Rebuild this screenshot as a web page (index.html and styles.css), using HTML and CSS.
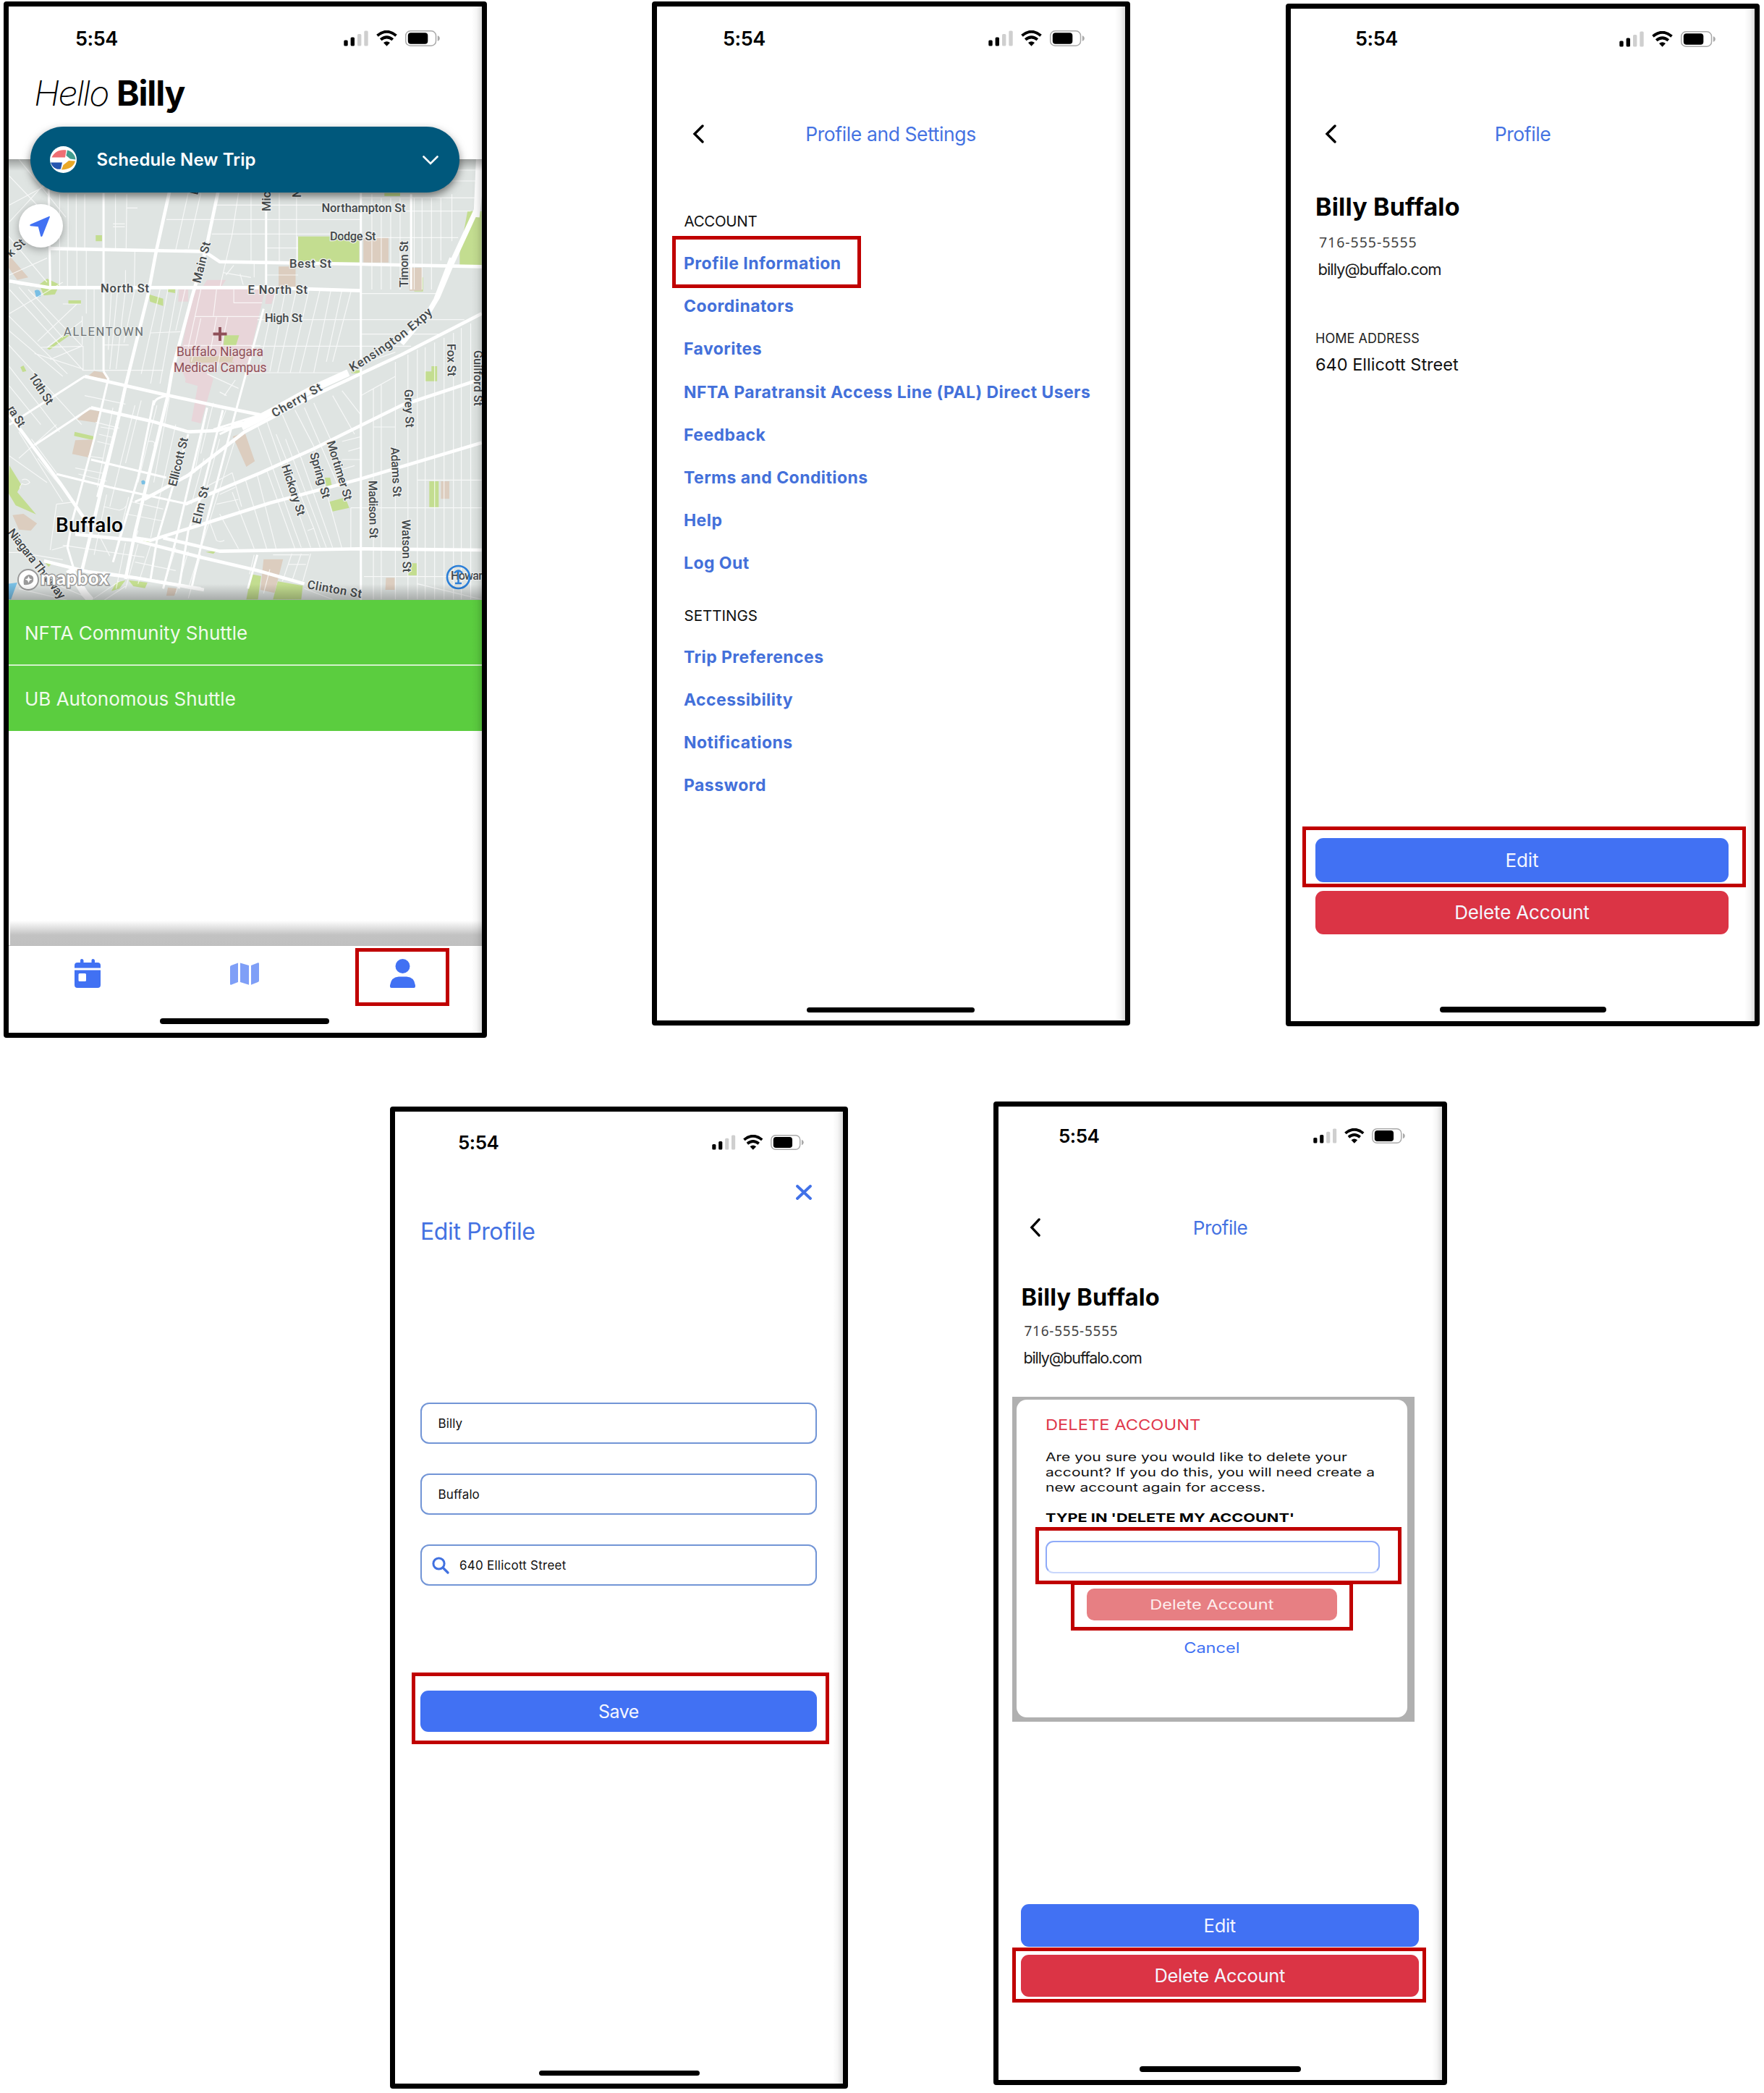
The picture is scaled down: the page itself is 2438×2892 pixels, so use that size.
FILE: index.html
```
<!DOCTYPE html>
<html lang="en">
<head>
<meta charset="utf-8">
<title>Profile and account screens</title>
<link rel="stylesheet" href="styles.css">
</head>
<body>
<svg class="defs" width="0" height="0" aria-hidden="true">
  <symbol id="status-icons" viewBox="0 0 133 22" preserveAspectRatio="none">
    <rect x="0.3" y="13.5" width="5.4" height="8" rx="1.6"/>
    <rect x="9.6" y="9.5" width="5.4" height="12" rx="1.6"/>
    <rect x="19" y="5" width="5.4" height="16.500" rx="1.6" fill="#cfcfcf"/>
    <rect x="28.300" y="0.500" width="5.4" height="21" rx="1.6" fill="#cfcfcf"/>
    <path d="M46.500 7.200Q59.500 -3.600 72.500 7.200" fill="none" stroke="#000" stroke-width="4"/>
    <path d="M51.200 12.800Q59.500 6 67.800 12.800" fill="none" stroke="#000" stroke-width="4"/>
    <path d="M55 17Q59.500 13.300 64 17L59.500 21.800Z"/>
    <rect x="85.700" y="0.800" width="41.800" height="20.400" rx="6.500" fill="#fff" stroke="#a9a9a9" stroke-width="1.500"/>
    <rect x="88.800" y="3.200" width="27.500" height="15.600" rx="4"/>
    <path d="M129.800 7.200Q132.800 8.200 132.800 11T129.800 14.800Z" fill="#a9a9a9"/>
  </symbol>
  <symbol id="back" viewBox="0 0 16 26" preserveAspectRatio="none">
    <path d="M14 2L3 13L14 24" fill="none" stroke="#000" stroke-width="3.400" stroke-linecap="round" stroke-linejoin="miter"/>
  </symbol>
</svg>

<main class="board">
  <div class="row row-top">

    <section class="phone home">
      <header class="status"><span class="time">5:54</span><svg class="status-icons"><use href="#status-icons"/></svg></header>
      <h1 class="hello"><i>Hello</i><b>Billy</b></h1>
      <div class="trip">
        <svg class="trip-logo" viewBox="0 0 37 37">
          <circle cx="18.500" cy="18.500" r="18.500" fill="#fff"/>
          <path d="M2.500 15.500C6 8 13 4 22.500 5.500L21 15.500Z" fill="#ee6f74"/>
          <path d="M24 5.500C31 7 35 13 35.500 18.500L28 17.500L22.500 13Z" fill="#419c8e"/>
          <path d="M1 22.500H17L15 31.500C9 33 3 29 1 22.500Z" fill="#2556b0"/>
          <path d="M35 20.500C33 28 27 32 16 32.500L18.500 26L26 20Z" fill="#eaa827"/>
        </svg>
        <span class="trip-label">Schedule New Trip</span>
        <svg class="trip-chevron" viewBox="0 0 22 13"><path d="M1.500 1.500L11 11L20.500 1.500" fill="none" stroke="#fff" stroke-width="2.600" stroke-linecap="round"/></svg>
      </div>
      <div class="map">
        <svg class="map-art" viewBox="12 220 654 609">
          <g transform="translate(0 400) scale(0.4337 0.3333)">
            <rect x="20" y="-545" width="1520" height="1840" fill="#dfe4e2"/>
            <g fill="#c3dd90">
              <path d="M950 -220H1145V-112H950ZM1490 -325H1535V-100H1465V-150ZM305 -225H325V-200H305ZM150 -45L190 -20L175 20L140 25L125 -20ZM475 20L520 38V68L478 50ZM218 45H258V60H218ZM150 245L205 190H222L158 250ZM65 322L75 315L84 338L72 342ZM1355 380V340H1375V318H1393V380ZM238 590L298 608V625L236 607ZM30 730L68 810L55 840L115 932L50 895L25 840ZM1368 795H1398V902H1368ZM1050 880L1100 862L1113 905L1060 920ZM1035 780H1052L1058 815H1040ZM1308 1135H1328V1185H1300ZM720 185L762 195L752 235H712ZM1225 -400H1275V-387H1225ZM1330 -50H1348V8H1320ZM800 1180L832 1188L822 1285H785ZM885 1210L965 1228L960 1285H870ZM425 1040L450 1028L490 1040L462 1055ZM410 1205L470 1215L462 1238L425 1230ZM370 1215L400 1205L380 1240L355 1250ZM535 -5H558V15L535 10ZM145 1135L168 1130L155 1150ZM655 1088L690 1082L680 1096Z"/>
              <path d="M1120 335H1148V347H1120Z"/>
            </g>
            <g fill="#dccdbf">
              <path d="M1158 -215H1238V-112H1158ZM888 -95H942V-10H888ZM1300 -90H1345V5H1305ZM30 -140L90 -50L55 -40L28 -90ZM280 360L300 338L335 345L342 372ZM245 540L280 498L318 505L308 552ZM240 625L298 622L285 697L230 682ZM742 610L780 592L812 712L785 735ZM840 1118H902L875 1258L830 1245ZM1405 795H1432V868H1405ZM40 935L75 930L118 970L98 1000L60 995ZM1230 1195H1258V1245H1228ZM535 1235L565 1240L555 1270H530ZM655 275H745V305H650Z"/>
            </g>
            <g fill="#e8d5d9">
              <path d="M625 0H845L790 305L740 330L745 300L680 310L605 305L595 385L570 300L612 30ZM850 0H880L865 60H845ZM570 0H600V50H568ZM660 -40H720L700 0H640ZM690 -10H830V10H680ZM600 300L660 345L680 370L640 555L610 545L630 400L590 385Z"/>
            </g>
            <path d="M715 190L762 190L752 232L712 235Z" fill="#c3dd90"/>
            <path d="M605 280L745 275L740 300L605 305Z" fill="#dccfb8"/>
            <path d="M110 5Q125 -5 130 15T115 30ZM450 795Q457 785 463 797V808H452ZM25 1220L55 1215L35 1285H20Z" fill="#79bfe4"/>

            <g class="minor">
              <path d="M30 -470L155 -300M30 -350L160 -440M30 -280L200 -520M60 -540L210 -300M28 -220L150 -30M30 -60L150 -130M28 -130L140 -260"/>
              <path d="M190 -395V-170M217 -395V-170M243 -395V-170M270 -395V-170M404 -395L402 -170M368 -395V-170M405 -338H438M360 -272H398M360 -260H398"/>
              <path d="M190 -170V-10M215 -170V-10M245 -165V-10M275 -165V-10M400 -80V-5M430 -165L428 -10"/>
              <path d="M690 -350H1150M530 -290H1148M675 -230H1148M850 -172H950M1150 -380H1520M1150 -325H1500M1150 -450H1520M1150 -495H1520M1150 -215H1460M1150 17H1400"/>
              <path d="M640 -400L600 -170M600 -400L560 -165M760 -400L740 -230L700 -5M800 -400V-120M890 -400V-110M945 -400V-110M948 -220V-112M850 -60H950M710 -70L800 -50M720 -60L745 -100M810 -50V-110M765 -65L775 -20"/>
              <path d="M1185 -395V0M1215 -380V0M1245 -380V0M1275 -380V0M1320 -380V0M1345 -380V0M1375 -380V0M1405 -380V-120M1440 -395V-200"/>
              <path d="M565 -5L510 390M535 0L480 390M510 0L450 350M480 180L575 175M590 0L560 170M640 0L600 240M620 112H830M690 0L680 110M745 0V55H835M585 232H830M640 120L610 300M690 115L670 260M725 115L690 340"/>
              <path d="M880 0L830 300M910 0L860 340M945 0L885 345M985 0L925 345M1020 0L955 345M1055 0L1000 345M1090 0L1040 300M1120 0L1060 300M800 235H1150M820 125H1480M780 345H1110M1150 185H1400M1150 235H1310M660 350L760 410M700 425L722 440M715 440L750 375"/>
              <path d="M30 0L265 335M60 -10L200 200M90 0L262 235M28 170L200 360M28 110L215 350M28 230L260 560M30 320L190 590M30 400L130 560M30 100L200 -30M120 215L245 60M150 240L262 130M160 290L260 235M200 60H258M265 235L130 240M110 265L265 330M262 335H520M270 440L400 475M265 235V335M300 0V335M275 0V100M262 110V230"/>
              <path d="M355 0L345 250M375 0L350 330M400 0L370 330M430 0L395 220M370 160H430M330 230H410"/>
              <path d="M60 700L180 560M30 690L150 800M100 620L180 760M120 700L240 890M60 590L200 880M180 890L160 1080M180 890L240 880M165 1080L220 1060"/>
              <path d="M320 570L370 580M315 600L365 615M310 630L360 645M305 550L380 575M280 690L330 700M240 740L340 765M250 765L340 795M330 900L380 915Q400 910 405 890M340 850L300 1100M410 860L360 1130M360 490L310 820M430 480L350 900M450 460L400 720M500 480L440 800M515 540L450 900M540 450L490 800M560 560L480 1030M470 630Q500 625 490 650"/>
              <path d="M660 500L620 760M680 470L640 680M720 500L690 600M650 700L610 890M700 620L650 860M750 620L600 1240M640 830L740 760L770 900M690 890L760 870M700 850L750 820"/>
              <path d="M820 560L940 1000L960 1070M850 545L990 1070M880 600L1000 990L1020 1070M910 620L1040 1070M900 520L960 700L1060 1070M940 500L1000 650L1090 1075M970 490L1080 820M1000 470L1060 640M1060 440L1130 600M1090 420L1150 520M780 780L850 1075M820 770L880 1075M740 840L810 1075M850 750L940 1075M700 930L760 1075M670 970L690 1040Q700 1050 715 1040"/>
              <path d="M1150 440L1260 360M1190 410V1285M1215 395V1285M1260 300V1285M1300 270V1285M1330 250V1285M1355 240V1285M1385 220V1285M1415 200V1285M1445 180V1285M1470 160V1285M1500 140V1285M1118 905H1535M1330 790H1535M1190 570H1260M1160 1190H1535M1330 1220L1535 1285M1170 300L1260 260M1090 630L1150 610M1110 670L1150 655M1118 905V1075M1090 705H1150M1080 750L1130 730"/>
              <path d="M810 1100L795 1180M930 1095L900 1210M960 1095L930 1210M990 1095L965 1210M980 1000L1000 990M870 1100H985M920 1140H975M860 1160L840 1260M970 1240L1060 1285M1150 1130V1285"/>
              <path d="M25 1090H60L200 1120M200 1060L330 1085L460 1110M320 1030L350 1105M400 1050L370 1240M440 1055L400 1240M440 1000L430 1040M560 1070L520 1240M600 1085L560 1260M640 1100L600 1280M480 1060L440 1220M330 1170L640 1235M430 1130L560 1165M300 1280L380 1210M330 1290L400 1230M60 1240L220 1290M140 1200L300 1290M400 930L520 960M420 880L520 910"/>
              <path d="M70 790Q85 780 95 800Q85 815 70 805Q60 820 65 825"/>
            </g>
            <g class="road">
              <path d="M330 -400V340M155 -440L160 -8M848 -400V0M1150 -400V1290M1310 -395V0"/>
              <path d="M400 400L262 1160M330 340L345 370L300 620L230 960L215 1070L240 1180M490 460L440 780L360 1130M490 480Q490 445 540 440M660 490L560 1040L520 1240M710 500L640 860L600 1000L570 1240M765 440L740 560L655 980L610 1240M840 80L765 440M380 520L310 860M600 600L500 1040L480 1200"/>
              <path d="M180 765L350 820L600 890M290 705L530 780M110 645L290 490M30 560L270 360M30 -35L60 -25L160 -8M430 880L520 830M820 1100L790 1240"/>
              <path d="M680 580L830 520M700 600L860 500M740 560L830 540"/>
            </g>
            <g class="avenue">
              <path d="M540 -405L498 -160L472 20L400 400L380 520L262 1160M695 -405L655 -160L612 30L548 340L535 440L430 1010L400 1200"/>
              <path d="M155 -170L640 -158L660 -150L700 -115L1150 -105L1535 -95M30 -35L155 -8H840L1150 5"/>
              <path d="M270 360L540 440L700 485L830 520M290 490L480 545L600 590L690 585L800 555"/>
              <path d="M1535 100L1280 270L1000 440L780 590L600 770L460 870M1535 370L1280 480L1000 660L830 760L590 890"/>
              <path d="M1535 635L1150 785L860 885L640 975L480 1040L430 1030"/>
              <path d="M70 590L190 800L290 990M30 520L70 590M240 1015L430 1040L640 1110L820 1165L970 1220M520 1030L700 1085L1150 1075L1535 1080M140 1125L280 1170L430 1195L650 1245"/>
            </g>
            <path class="highway" d="M1525 -540L1518 -330L1440 -110L1395 30L1370 85L1280 225M1540 -540L1520 -300"/>
            <path class="highway" d="M1440 -130L1390 40"/>
            <path class="highway wide" d="M1110 345L1000 410L840 525L770 570M220 1160L270 1260L290 1290"/>
          </g>

          <g class="labels">
            <text x="444.500" y="293" textLength="116">Northampton St</text>
            <text x="456" y="332" textLength="63.500">Dodge St</text>
            <text x="400" y="370" textLength="58">Best St</text>
            <text x="342.600" y="406" textLength="82.500">E North St</text>
            <text x="139" y="403.500" textLength="67">North St</text>
            <text x="366" y="445" textLength="52">High St</text>
            <text transform="translate(277 392) rotate(-76)" textLength="58">Main St</text>
            <text transform="translate(374 292) rotate(-90)">Mic</text>
            <text transform="translate(416 273) rotate(-90)">N</text>
            <text transform="translate(273 270) rotate(-76)">L</text>
            <text transform="translate(15 356) rotate(-42)">k St</text>
            <text transform="translate(563.500 397) rotate(-90)" textLength="64">Timon St</text>
            <path id="expy" d="M487 514Q551 477 598 433" fill="none" stroke="none"/>
            <text font-size="17"><textPath href="#expy" textLength="138">Kensington Expy</textPath></text>
            <text transform="translate(379.500 577) rotate(-30)" textLength="77">Cherry St</text>
            <text transform="translate(243.500 673) rotate(-76)" textLength="69">Ellicott St</text>
            <text transform="translate(276.700 725) rotate(-77)" textLength="53">Elm St</text>
            <text transform="translate(618 475) rotate(89)" textLength="45">Fox St</text>
            <text transform="translate(655 484) rotate(90)" textLength="77">Guilford St</text>
            <text transform="translate(559 538) rotate(88)" textLength="53">Grey St</text>
            <text transform="translate(540 618) rotate(87)" textLength="69">Adams St</text>
            <text transform="translate(451.500 611) rotate(73)" textLength="85">Mortimer St</text>
            <text transform="translate(428 627) rotate(74)" textLength="65">Spring St</text>
            <text transform="translate(389 644) rotate(72)" textLength="73">Hickory St</text>
            <text transform="translate(509.500 664) rotate(89)" textLength="80">Madison St</text>
            <text transform="translate(555.500 718) rotate(89)" textLength="73">Watson St</text>
            <text transform="translate(424 813) rotate(10)" textLength="76">Clinton St</text>
            <text transform="translate(39 520) rotate(57)" textLength="48">10th St</text>
            <text transform="translate(10 565) rotate(58)" textLength="31">ra St</text>
            <text transform="translate(10 736) rotate(52)" textLength="118">Niagara Thruway</text>
            <text x="623" y="801" textLength="44">Howar</text>
          </g>
          <text class="district" x="88" y="463.500" textLength="110">ALLENTOWN</text>
          <text class="campus" x="244" y="492" textLength="120">Buffalo Niagara</text>
          <text class="campus" x="240" y="514" textLength="128.500">Medical Campus</text>
          <path d="M294.500 461.500H313.500M304 452V471" stroke="#8f4f58" stroke-width="3.800"/>
          <text class="city" x="77" y="735" textLength="93">Buffalo</text>

          <circle cx="633.500" cy="797.500" r="15.500" fill="none" stroke="#2b7fd8" stroke-width="2.600"/>
          <path d="M633.500 790V806M628 792Q633.500 785 639 792M629 806H638" stroke="#2b7fd8" stroke-width="2.400" fill="none"/>

          <circle cx="39" cy="801" r="14" fill="#fff" stroke="#9a9a9a" stroke-width="2"/>
          <path d="M33 808Q31 796 40 794Q48 795 46 803Q43 809 33 808Z" fill="#9a9a9a"/>
          <path d="M39.500 796L41 799.500L44.500 800.500L41 802L39.500 805.500L38 802L34.500 800.500L38 799.500Z" fill="#fff"/>
          <text class="mapbox" x="56" y="808" textLength="94">mapbox</text>
        </svg>
        <div class="locate">
          <svg viewBox="0 0 28 30"><path d="M27.300 0.700L1 12Q-0.500 13.500 1.500 14.300L11.800 15.300L15.200 28.200Q16.500 30 17.600 28L28 1.500Z" fill="#4171f3"/></svg>
        </div>
      </div>
      <div class="shuttle">NFTA Community Shuttle</div>
      <div class="shuttle">UB Autonomous Shuttle</div>
      <div class="tab-shade"></div>
      <nav class="tabs">
        <div class="tab"><svg width="36" height="40" viewBox="0 0 36 40"><path d="M4 5H8V2Q8 0 10 0T12.500 2V5H23.500V2Q23.500 0 25.500 0T28 2V5H32Q36 5 36 9V12.500H0V9Q0 5 4 5ZM0 15.500H36V36Q36 40 32 40H4Q0 40 0 36ZM7 20Q5.500 20 5.500 21.500V29.500Q5.500 31 7 31H14.500Q16 31 16 29.500V21.500Q16 20 14.500 20Z" fill="#4171f3" fill-rule="evenodd"/></svg></div>
        <div class="tab"><svg width="40" height="31" viewBox="0 0 40 31"><path d="M0 6Q0 4.500 1.500 4L11 0.500V27L1.500 30.700Q0 31 0 29.500ZM14 0.500L26 4V30.700L14 27ZM29 4L38.500 0.300Q40 0 40 1.500V25Q40 26.500 38.500 27L29 30.700Z" fill="#7f9ff7"/></svg></div>
        <div class="tab marked"><svg width="35" height="40" viewBox="0 0 35 40"><circle cx="17.500" cy="10" r="10" fill="#4171f3"/><path d="M0 38V36.500Q1.500 25 12 24.500H23Q33.500 25 35 36.500V38Q35 40 33 40H2Q0 40 0 38Z" fill="#4171f3"/></svg></div>
      </nav>
      <div class="indicator"></div>
    </section>

    <section class="phone settings">
      <header class="status"><span class="time">5:54</span><svg class="status-icons"><use href="#status-icons"/></svg></header>
      <div class="nav"><svg class="back"><use href="#back"/></svg><h2>Profile and Settings</h2></div>
      <h3 class="group">ACCOUNT</h3>
      <ul class="links">
        <li class="marked">Profile Information</li>
        <li>Coordinators</li>
        <li>Favorites</li>
        <li>NFTA Paratransit Access Line (PAL) Direct Users</li>
        <li>Feedback</li>
        <li>Terms and Conditions</li>
        <li>Help</li>
        <li>Log Out</li>
      </ul>
      <h3 class="group second">SETTINGS</h3>
      <ul class="links">
        <li>Trip Preferences</li>
        <li>Accessibility</li>
        <li>Notifications</li>
        <li>Password</li>
      </ul>
      <div class="indicator"></div>
    </section>

    <section class="phone profile">
      <header class="status"><span class="time">5:54</span><svg class="status-icons"><use href="#status-icons"/></svg></header>
      <div class="nav"><svg class="back"><use href="#back"/></svg><h2>Profile</h2></div>
      <div class="person">
        <h1>Billy Buffalo</h1>
        <p class="tel">716-555-5555</p>
        <p class="mail">billy@buffalo.com</p>
        <p class="caption">HOME ADDRESS</p>
        <p class="address">640 Ellicott Street</p>
      </div>
      <div class="actions">
        <div class="button primary marked">Edit</div>
        <div class="button danger">Delete Account</div>
      </div>
      <div class="indicator"></div>
    </section>
  </div>

  <div class="row row-bottom">
    <section class="phone edit">
      <header class="status"><span class="time">5:54</span><svg class="status-icons"><use href="#status-icons"/></svg></header>
      <div class="close"><svg width="22" height="21" viewBox="0 0 22 21"><path d="M2 2L20 19M20 2L2 19" stroke="#4171e8" stroke-width="3.800" stroke-linecap="round"/></svg></div>
      <h1 class="title">Edit Profile</h1>
      <div class="fields">
        <div class="field">Billy</div>
        <div class="field">Buffalo</div>
        <div class="field search"><svg width="24" height="24" viewBox="0 0 24 24"><circle cx="9.500" cy="9.500" r="7.600" fill="none" stroke="#4171e0" stroke-width="3"/><path d="M15 15L22 22" stroke="#4171e0" stroke-width="3.200" stroke-linecap="round"/></svg>640 Ellicott Street</div>
      </div>
      <div class="actions"><div class="button primary marked">Save</div></div>
      <div class="indicator"></div>
    </section>

    <section class="phone remove">
      <header class="status"><span class="time">5:54</span><svg class="status-icons"><use href="#status-icons"/></svg></header>
      <div class="nav"><svg class="back"><use href="#back"/></svg><h2>Profile</h2></div>
      <div class="person">
        <h1>Billy Buffalo</h1>
        <p class="tel">716-555-5555</p>
        <p class="mail">billy@buffalo.com</p>
      </div>
      <div class="dialog-frame">
        <div class="dialog">
          <h4><span>DELETE ACCOUNT</span></h4>
          <p class="warning"><span>Are you sure you would like to delete your<br>account? If you do this, you will need create a<br>new account again for access.</span></p>
          <p class="prompt"><span>TYPE IN 'DELETE MY ACCOUNT'</span></p>
          <div class="confirm-input marked"></div>
          <div class="confirm marked"><span>Delete Account</span></div>
          <div class="cancel"><span>Cancel</span></div>
        </div>
      </div>
      <div class="actions">
        <div class="button primary">Edit</div>
        <div class="button danger marked">Delete Account</div>
      </div>
      <div class="indicator"></div>
    </section>
  </div>
</main>
</body>
</html>
```
FILE: styles.css
```
*, *::before, *::after { box-sizing: border-box; }
body, h1, h2, h3, h4, p, ul { margin: 0; padding: 0; font-weight: 400; }
ul { list-style: none; }
body {
  width: 2438px;
  height: 2892px;
  background: #fff;
  color: #000;
  font-family: Inter, "Liberation Sans", sans-serif;
  overflow: hidden;
}
svg { display: block; flex: none; }
.defs { position: absolute; }

/* board */
.board { display: flex; flex-direction: column; height: 2892px; }
.row { display: flex; align-items: flex-start; }
.row-top { height: 1522px; }

.phone {
  position: relative;
  display: flex;
  flex-direction: column;
  flex: none;
  border: 7px solid #000;
  border-radius: 4px;
  background: #fff;
}
.phone::after {
  content: "";
  position: absolute;
  inset: 0 0 0 auto;
  width: 14px;
  background: linear-gradient(to right, rgba(0, 0, 0, 0), rgba(0, 0, 0, 0.04) 50%, rgba(0, 0, 0, 0.15));
  pointer-events: none;
}
.home { width: 668px; height: 1432px; margin: 2px 0 0 5px; }
.settings { width: 661px; height: 1415px; margin: 2px 0 0 228px; }
.profile { width: 655px; height: 1413px; margin: 5px 0 0 215px; }
.edit { width: 633px; height: 1357px; margin: 7px 0 0 539px; }
.remove { width: 627px; height: 1359px; margin: 0 0 0 201px; }

/* status bar */
.status { display: flex; justify-content: space-between; align-items: center; flex: none; }
.time { font-size: 27px; font-weight: 600; letter-spacing: -0.4px; }
.status-icons { height: 22px; width: 133px; }
.home .status { height: 88px; margin-bottom: 1px; padding: 0 58px 0 92px; }
.settings .status { height: 88px; margin-bottom: 1px; padding: 0 56px 0 91px; }
.profile .status { height: 83px; margin-bottom: 1px; padding: 0 54px 0 89px; }
.edit .status { height: 85px; padding: 0 54px 0 87px; }
.remove .status { height: 80px; padding: 0 51px 0 83px; }
.edit .time, .remove .time { font-size: 26px; letter-spacing: -0.5px; }
.edit .status-icons, .remove .status-icons { width: 127px; height: 21px; }

.indicator { flex: none; align-self: center; width: 234px; height: 8px; margin-top: auto; margin-bottom: 12px; border-radius: 4px; background: #000; }
.home .indicator { margin-right: 2px; }
.settings .indicator { width: 232px; height: 7px; margin-bottom: 11px; margin-right: 1px; }
.profile .indicator { width: 230px; }
.edit .indicator { width: 222px; height: 7px; margin-bottom: 11px; }
.remove .indicator { width: 223px; margin-bottom: 11px; }

/* red callout round an element */
.marked { position: relative; }
.marked::before { content: ""; position: absolute; border: 5px solid #c00000; z-index: 2; }

/* home */
.hello { height: 61px; line-height: 61px; padding-left: 35px; font-size: 48px; white-space: nowrap; }
.hello i { font-weight: 200; letter-spacing: -1.9px; }
.hello b { font-weight: 700; letter-spacing: -1.2px; margin-left: 11.500px; }
.trip {
  position: relative;
  z-index: 1;
  display: flex;
  align-items: center;
  flex: none;
  width: 593px;
  height: 91px;
  margin: 16px 0 -46px 30px;
  padding: 0 29px 0 26.500px;
  border-radius: 46px;
  background: #00587c;
  box-shadow: 0 5px 12px rgba(0, 0, 0, 0.5);
}
.trip-logo { width: 37px; height: 37px; }
.trip-label { margin-left: 28px; color: #fff; font-size: 24px; font-weight: 600; letter-spacing: 0.1px; }
.trip-chevron { width: 22px; height: 13px; margin-left: auto; margin-top: 2px; }
.map { position: relative; flex: none; height: 609px; overflow: hidden; }
.map-art { width: 654px; height: 609px; }
.map::after {
  content: "";
  position: absolute;
  inset: 0;
  background:
    linear-gradient(to bottom, rgba(0, 0, 0, 0.3), rgba(0, 0, 0, 0) 16px),
    linear-gradient(to top, rgba(0, 0, 0, 0.25), rgba(0, 0, 0, 0) 22px);
}
.minor, .road, .avenue, .highway { fill: none; stroke: #fff; stroke-linejoin: round; }
.minor path, .road path, .avenue path, .highway { vector-effect: non-scaling-stroke; }
.minor { stroke-width: 1.2px; stroke-opacity: 0.75; }
.road { stroke-width: 3px; }
.avenue { stroke-width: 4.6px; }
.highway { stroke-width: 7px; }
.highway.wide { stroke-width: 10px; }
.map-art text { font-family: Roboto, sans-serif; }
.labels { font-size: 16.500px; font-weight: 500; fill: #43484a; stroke: #eef0ef; stroke-width: 2.5px; paint-order: stroke; }
.district { font-size: 16.500px; fill: #6b7173; stroke: #e8ecea; stroke-width: 2px; paint-order: stroke; }
.campus { font-size: 17.500px; fill: #8f4f58; stroke: #eee3e4; stroke-width: 2px; paint-order: stroke; }
.city { font-size: 28px; font-weight: 500; fill: #000; stroke: #f2f4f3; stroke-width: 3px; paint-order: stroke; }
.map-art .mapbox { font-family: Lato, sans-serif; font-size: 26px; font-weight: 700; fill: #fff; stroke: #999; stroke-width: 3px; paint-order: stroke; }
.locate {
  position: absolute;
  left: 14px;
  top: 62px;
  z-index: 1;
  display: flex;
  align-items: center;
  justify-content: center;
  width: 61px;
  height: 60px;
  padding-right: 3px;
  padding-top: 2px;
  border-radius: 50%;
  background: #fff;
  box-shadow: 0 3px 12px rgba(0, 0, 0, 0.3);
}
.locate svg { width: 28px; height: 30px; }
.shuttle { flex: none; height: 89px; line-height: 91px; padding-left: 22px; background: #5bcd3f; color: #f0fbec; font-size: 26px; }
.shuttle + .shuttle { height: 92px; border-top: 2px solid #d3f2ca; line-height: 91px; }
.tab-shade { flex: none; height: 34px; margin: 262px 0 0 2px; background: linear-gradient(to bottom, #fff, #c2c2c2 20px, #c0c0c0); }
.tabs { display: grid; grid-template-columns: 217px 218px 218px; height: 78px; background: #fff; border-top: 1px solid #bbb; }
.tab { display: flex; align-items: center; justify-content: center; padding-bottom: 1px; }
.tab.marked::before { left: 43.500px; top: 3px; width: 130px; height: 80px; }

/* navigation bar */
.nav { position: relative; display: flex; align-items: center; justify-content: center; flex: none; height: 40px; }
.nav h2 { color: #4472e2; font-size: 26.500px; letter-spacing: -0.4px; }
.back { position: absolute; left: 49px; top: 7px; width: 16px; height: 26px; }
.settings .nav { margin-top: 67px; }
.settings .nav h2 { margin-right: 1px; }
.profile .nav { margin-top: 69px; }
.profile .back { left: 47px; }
.remove .nav { margin-top: 67px; }
.remove .nav h2 { font-size: 26px; letter-spacing: -0.5px; }
.remove .back { left: 43px; width: 15px; }

/* settings */
.group { height: 30px; line-height: 30px; margin-top: 86px; padding-left: 37.500px; font-size: 20.500px; letter-spacing: -0.3px; color: #111; }
.group.second { margin-top: 27px; line-height: 31px; letter-spacing: 0; }
.links { margin-top: 13px; padding-left: 37px; color: #4370da; font-size: 23px; letter-spacing: 0.44px; }
.links li { height: 59.200px; line-height: 60px; font-weight: 700; white-space: nowrap; }
.links .marked::before { left: -16px; top: -8px; width: 261px; height: 72px; }

/* profile */
.person { display: flex; flex-direction: column; white-space: nowrap; }
.person h1 { height: 40px; line-height: 40px; font-size: 34px; font-weight: 700; letter-spacing: 0.18px; }
.tel { height: 26px; line-height: 26px; color: #444; font-family: "Noto Sans", sans-serif; font-size: 19.500px; letter-spacing: 0.96px; }
.mail { height: 26px; line-height: 26px; color: #1a1a1a; font-size: 22px; letter-spacing: -1px; }
.caption { height: 24px; line-height: 24px; margin-top: 70px; font-size: 18px; color: #222; letter-spacing: 0.05px; }
.address { height: 30px; line-height: 30px; margin-top: 8.500px; font-size: 23.500px; color: #111; }
.profile .person { margin-top: 61px; padding-left: 34px; }
.profile .tel { margin: 16px 0 0 5px; }
.profile .mail { margin: 11px 0 1px 3.500px; }
.remove .person { margin-top: 57px; padding-left: 31.500px; }
.remove .person h1 { font-size: 32.500px; letter-spacing: 0.2px; }
.remove .tel { margin: 13px 0 0 4px; font-size: 19px; letter-spacing: 0.75px; }
.remove .mail { margin: 11px 0 0 3px; font-size: 21.500px; letter-spacing: -1.150px; }

.actions { display: flex; flex-direction: column; gap: 12px; margin-top: auto; }
.button { display: flex; align-items: center; justify-content: center; height: 60.500px; border-radius: 11px; color: #f4f6ff; font-size: 26px; letter-spacing: -0.15px; }
.primary { background: #4171f3; }
.danger { background: #db3445; }
.profile .actions { padding: 0 36px 0 34px; margin-bottom: 100px; }
.profile .marked::before { left: -18px; width: 613px; top: -16.500px; height: 84.500px; }
.profile .indicator, .remove .indicator, .edit .indicator { margin-top: 0; }

/* edit profile */
.close { display: flex; justify-content: flex-end; align-items: center; height: 30px; margin-top: 11px; padding-right: 43px; }
.title { height: 40px; line-height: 40px; margin-top: 19.500px; padding-left: 35px; color: #4472e2; font-size: 32px; letter-spacing: -0.380px; }
.fields { display: flex; flex-direction: column; gap: 41px; margin-top: 216.500px; padding: 0 36px 0 35px; }
.field { display: flex; align-items: center; height: 57px; padding: 1px 0 0 22.500px; border: 2px solid #7295d6; border-radius: 12px; font-size: 17px; letter-spacing: 0.1px; color: #111; }
.search { padding-left: 14px; letter-spacing: 0.24px; }
.search svg { margin-right: 14px; }
.edit .actions { padding: 0 36px 0 35px; margin-bottom: 468px; }
.edit .button { height: 57px; font-size: 25px; letter-spacing: -0.5px; }
.edit .marked::before { left: -12.500px; right: -17px; top: -25px; height: 99px; }

/* delete dialog */
.dialog-frame { flex: none; width: 556px; height: 449px; margin: 41px 0 0 19px; padding: 4px 10px 6px 6px; background: #b0b0b0; }
.dialog { display: flex; flex-direction: column; height: 439px; padding: 22px 0 0 40px; border-radius: 14px; background: #fff; white-space: nowrap; }
.dialog span { display: inline-block; transform-origin: left center; }
.dialog h4 { height: 24px; line-height: 26px; font-size: 20px; color: #e0384c; }
.dialog h4 span { transform: scaleX(1.185); }
.warning { margin-top: 23px; font-size: 16.500px; line-height: 21px; color: #111; }
.warning span { transform: scaleX(1.276); }
.prompt { height: 24px; line-height: 24px; margin-top: 19px; font-size: 16.500px; }
.prompt span { font-weight: 700; transform: scaleX(1.313); }
.confirm-input { width: 462px; height: 45px; margin-top: 19.500px; border: 2px solid #8fabf8; border-bottom-color: #c9d7fb; border-radius: 11px; }
.confirm-input.marked::before { left: -16px; top: -20.500px; width: 506px; height: 79px; }
.confirm { display: flex; align-items: center; justify-content: center; width: 346px; height: 44px; margin: 21.500px 0 0 57px; border-radius: 10px; background: #e77f83; color: #fdeeee; font-size: 19px; }
.dialog .confirm span { transform: scaleX(1.242); transform-origin: center; }
.confirm.marked::before { left: -22px; top: -10px; width: 390px; height: 68px; z-index: 1; }
.cancel { width: 460px; height: 24px; line-height: 24px; margin-top: 26px; text-align: center; color: #4171f3; font-size: 20px; }
.dialog .cancel span { transform: scaleX(1.177); transform-origin: center; }
.remove .actions { gap: 11px; padding: 0 32px 0 30.500px; margin-bottom: 96px; }
.remove .button { height: 58.500px; font-size: 25.500px; letter-spacing: -0.3px; }
.remove .button.marked::before { left: -12px; right: -10px; top: -9.500px; height: 75.500px; }
```
